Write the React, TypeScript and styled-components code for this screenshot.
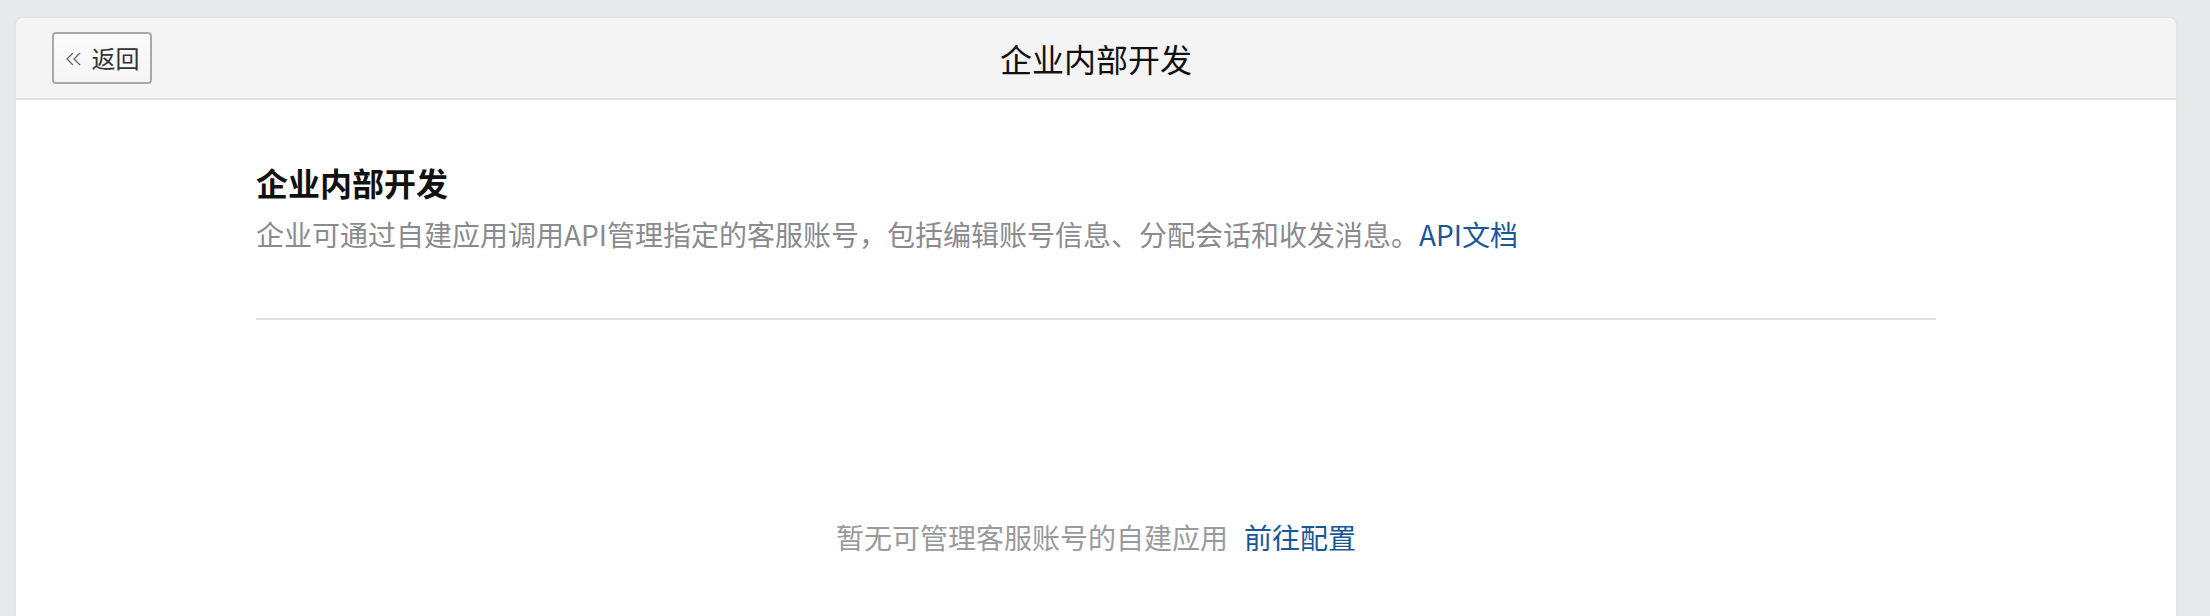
import React from "react";
import styled, { createGlobalStyle } from "styled-components";

const Global = createGlobalStyle`
  html, body {
    margin: 0;
    padding: 0;
    background: #e8e9eb;
    font-family: "PingFang SC", "Noto Sans CJK SC", "Noto Sans", sans-serif;
  }
  * { box-sizing: border-box; }
`;

const Page = styled.div`
  padding: 18px 34px 0 16px;
  height: 616px;
  overflow: hidden;
`;

const Card = styled.div`
  background: #ffffff;
  border-radius: 7px 7px 0 0;
  box-shadow: 0 0 3px rgba(0, 0, 0, 0.08);
  min-height: 640px;
  overflow: hidden;
`;

const Header = styled.div`
  height: 82px;
  background: #f4f4f4;
  border-bottom: 2px solid #dcdfe3;
  display: grid;
  grid-template-columns: 1fr auto 1fr;
  align-items: center;
  padding: 0 36px;
`;

const BackButton = styled.button`
  justify-self: start;
  width: 100px;
  height: 52px;
  display: flex;
  align-items: center;
  justify-content: center;
  gap: 9px;
  padding: 0;
  background: linear-gradient(#fbfbfb, #f5f5f5);
  border: 2px solid #a9a9a9;
  border-radius: 4px;
  font-family: inherit;
  font-size: 24px;
  line-height: 30px;
  color: #333333;
  cursor: pointer;

  svg {
    display: block;
    margin-top: 2px;
  }
`;

const HeaderTitle = styled.div`
  font-size: 32px;
  line-height: 44px;
  color: #111111;
`;

const Content = styled.div`
  padding: 60px 240px 0;
`;

const SectionTitle = styled.h2`
  margin: 0;
  font-size: 32px;
  line-height: 44px;
  font-weight: 700;
  color: #111111;
`;

const Description = styled.p`
  margin: 10px 0 0;
  font-size: 28px;
  line-height: 40px;
  color: #8a8b8f;
`;

const Link = styled.a<{ $gap?: number }>`
  color: #1a5794;
  text-decoration: none;
  margin-left: ${(p) => p.$gap ?? 0}px;
  cursor: pointer;
`;

const Divider = styled.div`
  margin-top: 64px;
  height: 2px;
  background: #e2e1e6;
`;

const Empty = styled.div`
  padding-top: 197px;
  display: flex;
  justify-content: center;
  font-size: 28px;
  line-height: 40px;
  color: #999a9e;
`;

const ChevronsLeft = () => (
  <svg width="18" height="14" viewBox="0 0 18 14" fill="none" stroke="#666" strokeWidth="1.3">
    <path d="M8 1 L2 7 L8 13" />
    <path d="M15 1 L9 7 L15 13" />
  </svg>
);

export default function App() {
  return (
    <>
      <Global />
      <Page>
        <Card>
          <Header>
            <BackButton>
              <ChevronsLeft />
              <span>返回</span>
            </BackButton>
            <HeaderTitle>企业内部开发</HeaderTitle>
            <div />
          </Header>
          <Content>
            <SectionTitle>企业内部开发</SectionTitle>
            <Description>
              企业可通过自建应用调用API管理指定的客服账号，包括编辑账号信息、分配会话和收发消息。
              <Link>API文档</Link>
            </Description>
            <Divider />
            <Empty>
              <span>暂无可管理客服账号的自建应用</span>
              <Link $gap={16}>前往配置</Link>
            </Empty>
          </Content>
        </Card>
      </Page>
    </>
  );
}
